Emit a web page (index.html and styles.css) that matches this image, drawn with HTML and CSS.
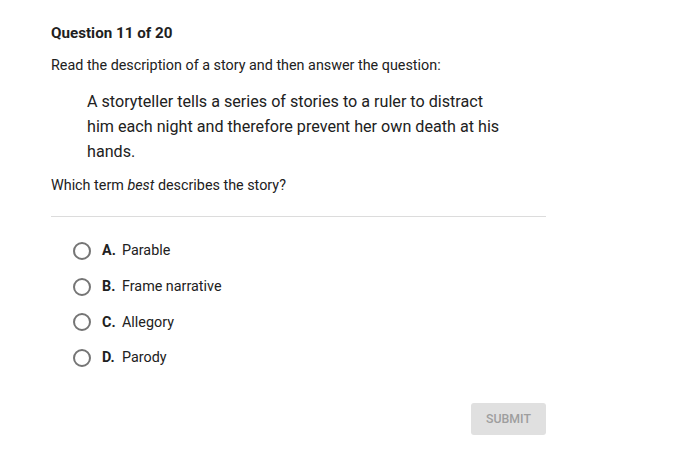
FILE: index.html
```html
<!DOCTYPE html>
<html>
<head>
<meta charset="utf-8">
<link rel="stylesheet" href="styles.css">
</head>
<body>
<main class="quiz">
  <h1 class="q-title">Question 11 of 20</h1>
  <p class="q-instr">Read the description of a story and then answer the question:</p>
  <p class="q-passage">A storyteller tells a series of stories to a ruler to distract him each night and therefore prevent her own death at his hands.</p>
  <p class="q-ask">Which term <em>best</em> describes the story?</p>
  <hr class="divider">
  <ul class="options">
    <li class="option"><span class="radio"></span><b class="letter">A.</b><span class="label">Parable</span></li>
    <li class="option"><span class="radio"></span><b class="letter">B.</b><span class="label">Frame narrative</span></li>
    <li class="option"><span class="radio"></span><b class="letter">C.</b><span class="label">Allegory</span></li>
    <li class="option"><span class="radio"></span><b class="letter">D.</b><span class="label">Parody</span></li>
  </ul>
  <div class="actions"><button class="submit">SUBMIT</button></div>
</main>
</body>
</html>
```
FILE: styles.css
```css
html, body { margin: 0; padding: 0; background: #fff; }
body { font-family: Roboto, "Liberation Sans", sans-serif; color: #212121; }
.quiz { width: 495px; margin-left: 51px; padding-top: 24px; }
.q-title { font-size: 15.2px; font-weight: 700; margin: 0; line-height: 18px; color: #1f1f1f; }
.q-instr { font-size: 14.35px; margin: 15px 0 0; line-height: 18px; }
.q-passage { font-size: 16.15px; line-height: 25px; margin: 14px 0 0 36px; width: 420px; }
.q-ask { font-size: 14.35px; line-height: 18px; margin: 13px 0 0; }
.divider { border: 0; border-top: 1px solid #dcdcdc; margin: 21px 0 0; height: 0; }
.options { list-style: none; margin: 16px 0 0; padding: 0 0 0 22px; }
.option { display: flex; align-items: center; height: 35.7px; font-size: 14.35px; }
.radio { width: 14px; height: 14px; border: 2px solid #757575; border-radius: 50%; margin-right: 11px; flex: none; }
.letter { font-weight: 700; width: 20px; }
.actions { display: flex; justify-content: flex-end; margin-top: 27px; }
.submit { width: 75px; height: 32px; border: 0; border-radius: 3px; background: #e0e0e0; color: #9e9e9e; font-family: Roboto, "Liberation Sans", sans-serif; font-size: 12.3px; font-weight: 500; padding: 0; }
```
